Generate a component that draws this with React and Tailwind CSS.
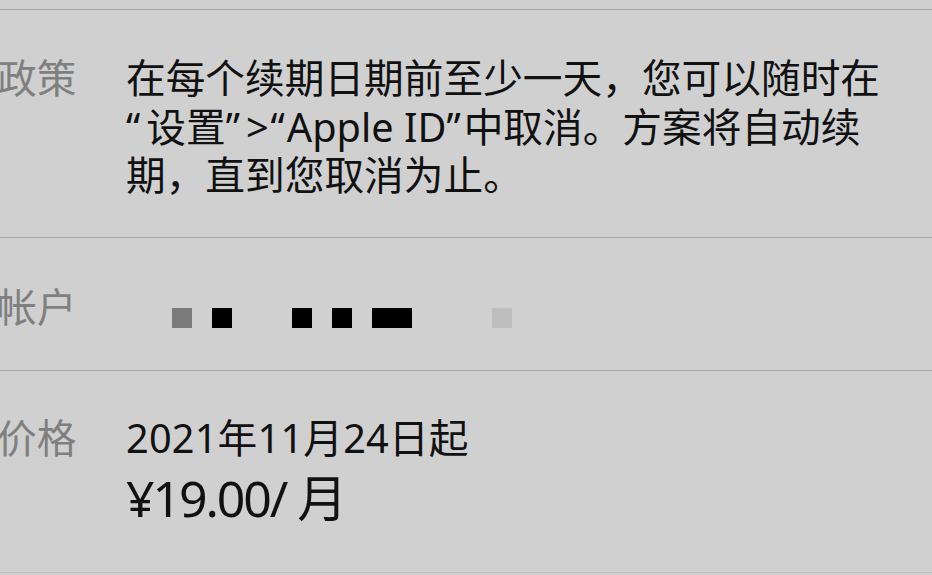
import React from 'react';

// curly quotes get a little extra room, as in the system font
const Q = ({ children, className = '' }) => (
  <span className={`inline-block ${className}`}>{children}</span>
);

// masked account name: [colour, width]
const accountBlocks = [
  { color: 'bg-[#7b7b7b]', w: 'w-[20px]', ml: 'ml-[46px]' },
  { color: 'bg-black', w: 'w-[20px]', ml: 'ml-[20px]' },
  { color: 'bg-black', w: 'w-[20px]', ml: 'ml-[60px]' },
  { color: 'bg-black', w: 'w-[20px]', ml: 'ml-[20px]' },
  { color: 'bg-black', w: 'w-[40px]', ml: 'ml-[20px]' },
  { color: 'bg-[#bdbdbd]', w: 'w-[20px]', ml: 'ml-[80px]' },
];

const Row = ({ label, children, className }) => (
  <div className={`flex border-b border-[#a9a9a9] ${className}`}>
    <div className="w-[129px] -ml-[3px] shrink-0 text-[#7f7f7f] leading-[48px] whitespace-nowrap">
      {label}
    </div>
    <div className="flex-1 min-w-0">{children}</div>
  </div>
);

const App = () => {
  return (
    <div className="w-[932px] h-[575px] overflow-hidden bg-[#d0d0d0] text-[#111] text-[39.7px] font-['Noto_Sans','Noto_Sans_CJK_SC',sans-serif]">
      <div className="h-[9px]" />
      <div className="border-t border-[#a9a9a9]">
        {/* 政策 */}
        <Row label="政策" className="h-[228px] pt-[44px]">
          <div className="leading-[48.5px] whitespace-nowrap">在每个续期日期前至少一天，您可以随时在</div>
          <div className="leading-[48.5px] whitespace-nowrap">
            <Q className="pr-[6px]">“</Q>设置<Q className="pr-[6px]">”</Q>&gt;
            <Q className="pl-[2px] pr-[2px]">“</Q>Apple ID<Q className="pr-[3px]">”</Q>中取消。方案将自动续
          </div>
          <div className="leading-[48.5px] whitespace-nowrap">期，直到您取消为止。</div>
        </Row>

        {/* 帐户 */}
        <Row label="帐户" className="h-[133px] pt-[45px]">
          <div className="flex pt-[25px]">
            {accountBlocks.map((b, i) => (
              <div key={i} className={`h-[20px] ${b.w} ${b.ml} ${b.color}`} />
            ))}
          </div>
        </Row>

        {/* 价格 */}
        <Row label="价格" className="h-[202px] pt-[43px] border-[#bcbcbc]">
          <div className="leading-[48px] tracking-[0.2px] whitespace-nowrap">2021年11月24日起</div>
          <div className="pt-[6px] text-[50px] leading-[60px] tracking-[-2.1px] whitespace-nowrap">¥19.00/ 月</div>
        </Row>
      </div>
    </div>
  );
};

export default App;
